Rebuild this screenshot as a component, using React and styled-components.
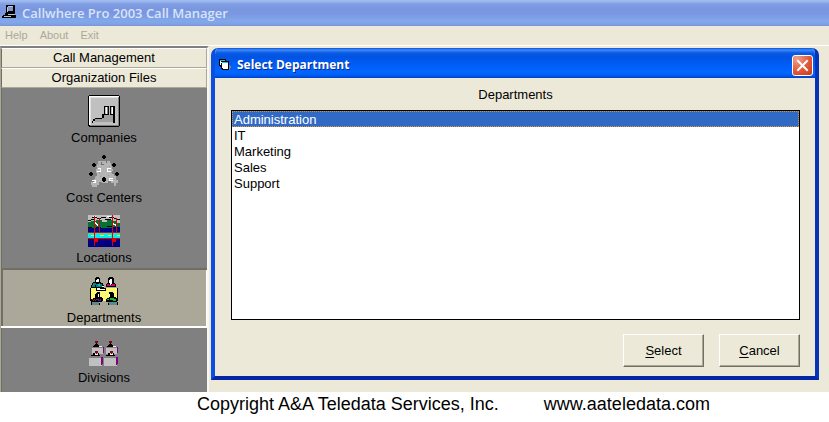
import React, { useState } from 'react'
import styled, { createGlobalStyle } from 'styled-components'

const colors = {
    face: '#ece9d8',
    shadow: '#aca899',
    dark: '#716f64',
    gray: '#808080',
    select: '#316ac5',
    blue: '#0055e5',
    white: '#ffffff',
}

const GlobalStyle = createGlobalStyle`
    * {
        box-sizing: border-box;
    }
    body {
        margin: 0;
        background: ${colors.white};
        color: #000;
        font-family: 'Liberation Sans', Arial, sans-serif;
        font-size: 13px;
        line-height: 16px;
    }
    button, select {
        font: inherit;
        color: inherit;
        margin: 0;
        padding: 0;
    }
`

const AppWindow = styled.div`
    background: ${colors.face};
`

const TitleBar = styled.header`
    display: flex;
    align-items: center;
    gap: 4px;
    height: 26px;
    padding: 0 2px;
    background: linear-gradient(#9db9ee 0, #a0bcf0 1px, #7f9ee4 4px, #7a96df 9px, #7a98e2 14px, #82a8ea 21px, #80a2e6 24px, #7b93d8 26px);
`

const WindowTitle = styled.h1`
    margin: 0;
    color: #d8e4f8;
    font-family: 'Open Sans', 'Noto Sans', sans-serif;
    font-size: 13px;
    font-weight: 600;
    line-height: 26px;
`

const MenuBar = styled.nav`
    display: flex;
    gap: 12px;
    height: 20px;
    padding: 1px 5px 0;
    border-bottom: 1px solid ${colors.white};
`

const MenuLink = styled.a`
    color: ${colors.shadow};
    font-size: 11px;
    line-height: 16px;
    text-decoration: none;
`

const Workspace = styled.main`
    display: flex;
    align-items: stretch;
`

const Sidebar = styled.aside`
    flex: 0 0 209px;
    padding-bottom: 3px;
    background: ${colors.gray};
    border-left: 1px solid ${colors.shadow};
    border-top: 2px solid ${colors.gray};
    border-right: 2px solid #f8f7f1;
    box-shadow: inset 1px 0 ${colors.dark};
`

const GroupButton = styled.button`
    display: block;
    width: 100%;
    height: 20px;
    background: ${colors.face};
    border: 1px solid ${colors.white};
    border-right-color: ${colors.shadow};
    border-bottom-color: ${colors.shadow};
    line-height: 18px;
    border-left-color: ${colors.dark};
`

const Item = styled.button`
    display: flex;
    flex-direction: column;
    align-items: center;
    gap: 3px;
    width: 100%;
    height: 60px;
    padding-top: 7px;
    border: 0;
    background: ${({ $active }) => ($active ? colors.shadow : 'transparent')};
    box-shadow: ${({ $active }) =>
        $active
            ? `inset 0 -2px ${colors.white}, inset 2px 2px ${colors.dark}, inset -1px 0 ${colors.white}`
            : 'none'};
`

const Dialog = styled.section`
    flex: 1;
    margin: 2px 10px 12px 2px;
    background: ${colors.face};
    border: 4px solid ${colors.blue};
    border-top: 0;
    border-color: #0040d8 #0733b8 #0527a5 #0b4ee0;
    border-radius: 7px 7px 0 0;
    overflow: hidden;
`

const DialogBar = styled.header`
    display: flex;
    align-items: center;
    gap: 4px;
    height: 30px;
    padding: 4px 2px 0;
    background: linear-gradient(#0a50d8 0, #3c8cf8 2px, #0a5ae6 5px, #0054e2 9px, #005cf5 16px, #0066ff 24px, #0060f8 27px, #0040c8 30px);
`

const DialogTitle = styled.h2`
    flex: 1;
    margin: 0;
    color: ${colors.white};
    font-family: 'Open Sans', 'Noto Sans', sans-serif;
    font-size: 12px;
    font-weight: 700;
    line-height: 20px;
    text-shadow: 1px 1px #0a2a90;
`

const CloseButton = styled.button`
    display: flex;
    align-items: center;
    justify-content: center;
    width: 21px;
    height: 21px;
    border: 1px solid ${colors.white};
    border-radius: 3px;
    background: radial-gradient(circle at 20% 15%, #f0a088, #e2583a 55%, #c83a14);
`

const DialogBody = styled.div`
    display: flex;
    flex-direction: column;
    padding: 9px 15px 9px 16px;
`

const ListLabel = styled.label`
    margin-bottom: 7px;
    text-align: center;
`

const ListBox = styled.select`
    width: 100%;
    height: 210px;
    padding: 0;
    border: 1px solid #000;
    border-radius: 0;
    outline: 0;
    background: ${colors.white};
    overflow: hidden;
`

const Option = styled.option`
    height: 16px;
    min-height: 16px;
    padding: 1px 2px 0;
    line-height: 16px;

    &:checked {
        background: linear-gradient(${colors.select}, ${colors.select});
        -webkit-text-fill-color: ${colors.white};
        outline: 1px dotted #d8962c;
        outline-offset: -1px;
    }
`

const Actions = styled.div`
    display: flex;
    justify-content: flex-end;
    gap: 15px;
    margin-top: 14px;
`

const PushButton = styled.button`
    width: 81px;
    height: 33px;
    background: ${colors.face};
    border: 1px solid ${colors.white};
    border-right-color: ${colors.dark};
    border-bottom-color: ${colors.dark};
    box-shadow: inset -1px -1px ${colors.shadow};
`

const Underlined = styled.span`
    text-decoration: underline;
    text-underline-offset: 2px;
`

const Footer = styled.footer`
    display: flex;
    gap: 45px;
    padding: 1px 0 8px 197px;
    font-size: 18px;
    line-height: 22px;
    white-space: nowrap;
`

const Pixels = ({ size = 32, children }) => (
    <svg width={size} height={size} viewBox={`0 0 ${size} ${size}`} shapeRendering="crispEdges" aria-hidden="true">
        {children}
    </svg>
)

const ComputerIcon = () => (
    <Pixels size={16}>
        <path fill="#000" d="M4 0h9v8H4zM3 8h10v2H3zM1 10h13v3H0v-2h1z" />
        <path fill="#b8c4d8" d="M6 1h5v1H6zM5 2h1v5H5zM6 9h7v1H6zM2 11h7v1H2z" />
        <path fill="#8098c8" d="M6 2h5v4H6z" />
    </Pixels>
)

const FormIcon = () => (
    <Pixels size={16}>
        <path fill="#000" d="M2 2h7v2h3v9H5v-1H4v-2H3V9H2z" />
        <path fill="#fff" d="M3 4h2v4H3zM5 6h6v5H5zM6 11h5v1H6z" />
        <path fill="#20c8d0" d="M3 3h5v1H3zM5 5h6v1H5z" />
        <path fill="#000" d="M4 4h1v1H4zM4 6h1v4H4z" />
        <path fill="#7886a0" d="M12 8h1v1h1v2h-1v2h-1z" />
    </Pixels>
)

const CompaniesIcon = () => (
    <Pixels>
        <path fill="#000" d="M1 0h30v1h1v30h-1v1H1v-1H0V1h1z" />
        <path fill="#fff" d="M1 1h30v1H3v28H1z" />
        <path fill="#e0e0e0" d="M2 2h28v1H3v27H2z" />
        <path fill="#808080" d="M30 2h1v29H2v-1h28z" />
        <path fill="#c0c0c0" d="M3 3h27v27H3z" />
        <path fill="#a0a0a0" d="M5 27h2v-3h7v-4h13v7z" />
        <path fill="#000" d="M4 26h1v2H4zM5 24h2v2H5zM7 23h7v1H7zM14 19h2v4h-2zM16 11h5v1h-4v8h-1zM20 12h1v8h-1zM22 11h5v17h-2V12h-2v8h-1zM16 19h5v1h-5zM22 19h4v1h-4z" />
        <path fill="#fff" d="M18 12h1v7h-1zM24 12h1v7h-1z" />
        <path fill="#808080" d="M19 12h1v7h-1z" />
    </Pixels>
)

const CostCentersIcon = () => (
    <Pixels>
        <path fill="#b4b4b4" d="M10 6h12v2h1v3h1v3h1v2h-1v3h2v2h2v4h2v3h-2v3h-2v-3h-3v-2h-3v2h-6v-1h-3v3h-2v2H6v2H4v-4H3v-3h3v-3h1v-3h2v-3H8v-4h1V9h1z" />
        <path fill="#989898" d="M8 11h1v1H8zM10 9h1v1h-1zM11 17h1v2h-1zM7 21h1v1H7zM23 17h1v1h-1zM25 22h1v1h-1zM21 11h1v1h-1zM12 21h1v1h-1zM20 20h1v1h-1zM26 24h1v1h-1z" />
        <path fill="#707070" d="M13 7h1v2h2v1h-3zM18 6h1v2h-1z" />
        <path fill="#fff" d="M10 13h3v1h-3zM12 14h1v2h-1zM9 16h4v1H9zM19 13h4v1h-4zM19 14h1v2h-1zM19 16h4v1h-4zM4 25h4v1H4zM7 26h1v1H7zM5 27h3v1H5zM21 23h4v1h-4zM21 24h1v2h-1zM22 25h3v1h-3z" />
        <path fill="#000" d="M15 0h2v1h1v2h-1v1h-2V3h-1V1h1zM5 8h2v1h1v2H7v1H5v-1H4V9h1zM25 8h2v1h1v2h-1v1h-2v-1h-1V9h1zM2 17h2v1h1v2H4v1H2v-1H1v-2h1zM28 17h2v1h1v2h-1v1h-2v-1h-1v-2h1zM15 22h2v1h1v3h-1v1h-2v-1h-1v-3h1z" />
    </Pixels>
)

const LocationsIcon = () => (
    <Pixels>
        <path fill="#c0c0c0" d="M0 0h32v9H0z" />
        <path fill="#087030" d="M0 7h3V6h5V5h6v2h5V5h5v1h4v2h4v6H0z" />
        <path fill="#000" d="M0 5h3v1H0zM3 4h3v1H3zM4 2h5v1H4zM9 3h4v1H9zM13 2h5v1h-5zM17 4h6v1h-6zM21 2h5v1h-5zM26 3h3v1h-3zM29 4h3v1h-3zM0 12h4v1H0zM19 11h5v1h-5z" />
        <path fill="#fff" d="M7 7h1v1h1v1h1v2H9v-1H8V9H7zM25 8h1v1h2v2h-1v-1h-2zM5 1h3v1H5zM19 1h4v1h-4z" />
        <path fill="#000080" d="M0 13h8v-1h5v1h11v-1h8v5H0zM0 24h32v8H0z" />
        <path fill="#00f0f0" d="M0 18h32v5H0z" />
        <path fill="#ffff00" d="M3 20h4v1H3zM12 20h4v1h-4zM20 20h3v1h-3zM29 20h3v1h-3z" />
        <path fill="#e00000" d="M6 1h1v30H6zM11 3h1v14h-1zM24 0h1v31h-1zM28 3h1v14h-1zM0 17h32v1H0zM0 23h32v1H0zM7 23h3v4H7zM25 23h3v4h-3z" />
    </Pixels>
)

const DepartmentsIcon = () => (
    <Pixels>
        <defs>
            <pattern id="tableCloth" width="2" height="2" patternUnits="userSpaceOnUse">
                <rect width="2" height="2" fill="#ffff30" />
                <path fill="#fff8b0" d="M0 0h1v1H0zM1 1h1v1H1z" />
            </pattern>
            <pattern id="seat" width="2" height="2" patternUnits="userSpaceOnUse">
                <rect width="2" height="2" fill="#808080" />
                <path fill="#309898" d="M0 0h1v1H0zM1 1h1v1H1z" />
            </pattern>
        </defs>
        <path fill="#000" d="M2 13h28v13H2z" />
        <path fill="url(#tableCloth)" d="M3 13h26v13H3z" />
        <path fill="#000" d="M8 2h3v1h1v4h1v1h2v2h1v3H3v-3h1V8h1V7h2V3h1zM21 2h4v1h1v5h1v1h1v3H18V9h1V8h1V3h1z" />
        <path fill="#fff" d="M9 4h2v3H8V5h1zM22 4h2v5h-1v1h-1V8h-1V5h1z" />
        <path fill="#008080" d="M5 8h3v1h3V8h1v1h2v2h1v1H8v-2H7v2H4v-2h1z" />
        <path fill="#20b8b0" d="M10 9h2v2h-2zM5 9h1v1H5z" />
        <path fill="#d00080" d="M19 9h2v1h3V9h3v2h-8z" />
        <path fill="#000" d="M8 13h10v3H8z" />
        <path fill="#fff" d="M9 13h3v1h5v1H9zM14 11h2v1h-2z" />
        <path fill="#000" d="M9 17h3v5h2v1h1v3h-1v1H3v-3h2v-1h2v-4h1v-1h1zM21 17h4v1h1v4h2v1h1v4H18v-3h1v-1h2z" />
        <path fill="#fff" d="M10 19h1v3h-1zM21 19h1v3h-1z" />
        <path fill="#b01818" d="M4 24h1v1H4zM6 24h1v1H6zM5 25h1v1H5zM7 25h1v1H7zM8 24h1v1H8z" />
        <path fill="#5010b0" d="M9 24h2v1H9zM10 25h3v1h-3zM12 24h1v1h-1z" />
        <path fill="#10b838" d="M19 24h2v1h-2zM22 23h4v2h-4zM25 24h3v2h-3z" />
        <path fill="url(#seat)" d="M4 27h7v3H4zM20 27h9v3h-9z" />
        <path fill="#000" d="M3 27h1v3H3zM11 28h1v2h-1zM20 28h1v2h-1zM29 27h1v3h-1z" />
    </Pixels>
)

const BackDesk = ({ x }) => (
    <g transform={`translate(${x} 6)`}>
        <path fill="#900010" d="M3 0h3v2H5v1H4V2H3z" />
        <path fill="#000" d="M4 2h1v1h1v1h1v1h2v1H1V5h1V4h1V3h1z" />
        <path fill="#e8e8e8" d="M7 5h3v1H7z" />
        <path fill="#c0c0c0" d="M0 7h11v6H0z" />
        <path fill="#800080" d="M11 6h1v6h-1z" />
    </g>
)

const FrontDesk = ({ x }) => (
    <g transform={`translate(${x} 16)`}>
        <path fill="#900010" d="M6 0h3v2H8v1H7V2H6z" />
        <path fill="#000" d="M4 2h2v1h3V2h1v2h1v1H2V4h2z" />
        <path fill="#fff" d="M6 3h3v1H6z" />
        <path fill="#c0c0c0" d="M0 7h13v8H0z" />
        <path fill="#800080" d="M12 6h2v7h-1v1h-1z" />
    </g>
)

const DivisionsIcon = () => (
    <Pixels>
        <BackDesk x={4} />
        <BackDesk x={18} />
        <FrontDesk x={1} />
        <FrontDesk x={16} />
    </Pixels>
)

const files = [
    { name: 'Companies', Icon: CompaniesIcon },
    { name: 'Cost Centers', Icon: CostCentersIcon },
    { name: 'Locations', Icon: LocationsIcon },
    { name: 'Departments', Icon: DepartmentsIcon },
    { name: 'Divisions', Icon: DivisionsIcon },
]

const departments = ['Administration', 'IT', 'Marketing', 'Sales', 'Support']

function App() {
    const [page, setPage] = useState('Departments')
    const [department, setDepartment] = useState('Administration')

    return (
        <>
            <GlobalStyle />
            <AppWindow>
                <TitleBar>
                    <ComputerIcon />
                    <WindowTitle>Callwhere Pro 2003 Call Manager</WindowTitle>
                </TitleBar>
                <MenuBar>
                    <MenuLink href="#help">Help</MenuLink>
                    <MenuLink href="#about">About</MenuLink>
                    <MenuLink href="#exit">Exit</MenuLink>
                </MenuBar>
                <Workspace>
                    <Sidebar>
                        <GroupButton type="button">Call Management</GroupButton>
                        <GroupButton type="button">Organization Files</GroupButton>
                        {files.map(({ name, Icon }) => (
                            <Item key={name} type="button" $active={name === page} onClick={() => setPage(name)}>
                                <Icon />
                                {name}
                            </Item>
                        ))}
                    </Sidebar>
                    <Dialog>
                        <DialogBar>
                            <FormIcon />
                            <DialogTitle>Select Department</DialogTitle>
                            <CloseButton type="button" aria-label="Close">
                                <svg width="13" height="13" viewBox="0 0 13 13">
                                    <path d="M2 2l9 9M11 2l-9 9" stroke="#fff" strokeWidth="2" strokeLinecap="square" />
                                </svg>
                            </CloseButton>
                        </DialogBar>
                        <DialogBody>
                            <ListLabel htmlFor="departments">Departments</ListLabel>
                            <ListBox
                                id="departments"
                                size={13}
                                value={department}
                                onChange={(e) => setDepartment(e.target.value)}
                            >
                                {departments.map((name) => (
                                    <Option key={name} value={name}>{name}</Option>
                                ))}
                            </ListBox>
                            <Actions>
                                <PushButton type="button"><Underlined>S</Underlined>elect</PushButton>
                                <PushButton type="button"><Underlined>C</Underlined>ancel</PushButton>
                            </Actions>
                        </DialogBody>
                    </Dialog>
                </Workspace>
            </AppWindow>
            <Footer>
                <span>Copyright A&amp;A Teledata Services, Inc.</span>
                <span>www.aateledata.com</span>
            </Footer>
        </>
    )
}

export default App
